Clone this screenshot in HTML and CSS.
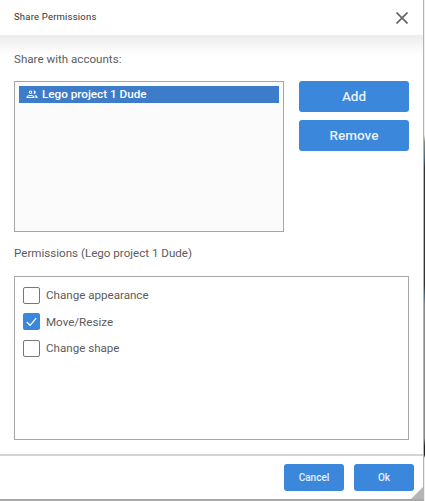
FILE: index.html
```html
<!DOCTYPE html>
<html lang="en">
<head>
    <meta charset="UTF-8">
    <meta name="viewport" content="width=device-width, initial-scale=1.0">
    <title>Share Permissions</title>
    <link rel="stylesheet" href="styles.css">
</head>
<body>
    <div class="dialog">
        <div class="dialog-header">
            <span class="dialog-title">Share Permissions</span>
            <svg class="close-icon" width="12" height="12" viewBox="0 0 12 12">
                <path d="M0.500 0.500L11.500 11.500M11.500 0.500L0.500 11.500" stroke="#666" stroke-width="1.700" fill="none"/>
            </svg>
        </div>

        <div class="dialog-body">
            <div class="section-label">Share with accounts:</div>
            <div class="accounts-row">
                <div class="account-list">
                    <div class="account-item">
                        <svg class="group-icon" width="12" height="12" viewBox="0 0 24 24">
                            <path d="M9 12a3.500 3.500 0 1 0 0-7 3.500 3.500 0 0 0 0 7zm0-2a1.500 1.500 0 1 1 0-3 1.500 1.500 0 0 1 0 3zm0 4c-2.700 0-8 1.300-8 4v2h16v-2c0-2.700-5.300-4-8-4zm-6 4c.3-.8 3.400-2 6-2s5.700 1.200 6 2H3zM16 12a3.500 3.500 0 0 0 0-7c-.4 0-.8.100-1.100.2a6 6 0 0 1 0 6.600c.3.100.7.200 1.100.2zm1 2.100c1.200.9 2 2.100 2 3.900v2h4v-2c0-2.300-3.500-3.600-6-3.900z" fill="#fff"/>
                        </svg>
                        <span>Lego project 1 Dude</span>
                    </div>
                </div>
                <div class="account-actions">
                    <button class="btn btn-large">Add</button>
                    <button class="btn btn-large">Remove</button>
                </div>
            </div>

            <div class="section-label permissions-label">Permissions (Lego project 1 Dude)</div>
            <div class="permission-list">
                <div class="permission-row">
                    <span class="checkbox"></span>
                    <span>Change appearance</span>
                </div>
                <div class="permission-row">
                    <span class="checkbox checked">
                        <svg width="17" height="17" viewBox="0 0 18 18">
                            <path d="M4 9.500L7.500 13L14 5.500" stroke="#fff" stroke-width="1.300" fill="none"/>
                        </svg>
                    </span>
                    <span>Move/Resize</span>
                </div>
                <div class="permission-row">
                    <span class="checkbox"></span>
                    <span>Change shape</span>
                </div>
            </div>
        </div>

        <div class="dialog-footer">
            <button class="btn btn-small">Cancel</button>
            <button class="btn btn-small">Ok</button>
        </div>
        <div class="resize-grip"></div>
    </div>
</body>
</html>
```

FILE: styles.css
```css
* {
    box-sizing: border-box;
}

body {
    margin: 0;
    width: 425px;
    height: 501px;
    overflow: hidden;
    background: linear-gradient(#f0f0f0 0, #f0f0f0 135px, #7f8f78 142px, #3f6f8a 158px, #333 168px, #333 285px, #3f6f8a 295px, #8a8a8a 305px, #8a8a8a 438px, #222 446px, #222 455px, #eee 458px);
    font-family: Roboto, "Liberation Sans", sans-serif;
    color: #555;
}

.dialog {
    position: relative;
    width: 424px;
    height: 501px;
    background: #fff;
    border-right: 1px solid #b4b4b4;
    border-bottom: 2px solid #a8a8a8;
    display: flex;
    flex-direction: column;
}

.dialog-header {
    height: 35px;
    flex-shrink: 0;
    display: flex;
    align-items: center;
    justify-content: space-between;
    padding: 0 15px 3px 14px;
}

.dialog-title {
    font-size: 9.500px;
    letter-spacing: 0.200px;
    color: #333;
}

.close-icon {
    display: block;
    margin-top: 3px;
}

.dialog-body {
    flex: 1;
    padding: 16px 14px 0 14px;
    background: linear-gradient(#ececec 0, #fff 20px);
}

.section-label {
    font-size: 11.600px;
    line-height: 16px;
    color: #5c5c5c;
}

.accounts-row {
    display: flex;
    justify-content: space-between;
    margin-top: 14px;
}

.account-list {
    width: 270px;
    height: 151px;
    border: 1px solid #a6a6a6;
    background: #fbfbfb;
    padding: 4px;
}

.account-item {
    height: 17px;
    background: #3d7cc9;
    color: #fff;
    font-size: 11.700px;
    font-weight: 500;
    display: flex;
    align-items: center;
    gap: 4px;
    padding: 0 0 1px 7px;
}

.group-icon {
    display: block;
}

.account-actions {
    width: 110px;
    display: flex;
    flex-direction: column;
    gap: 8px;
}

.btn {
    border: none;
    border-radius: 3px;
    background: #3a87dc;
    color: #e8f1fb;
    font-family: Roboto, "Liberation Sans", sans-serif;
    font-weight: 500;
    padding: 0;
}

.btn-large {
    height: 31px;
    font-size: 13.500px;
    padding-bottom: 2px;
}

.permissions-label {
    margin-top: 13px;
}

.permission-list {
    margin-top: 15px;
    height: 164px;
    border: 1px solid #a6a6a6;
    padding: 5px 8px;
}

.permission-row {
    height: 26.500px;
    display: flex;
    align-items: center;
    gap: 6px;
    font-size: 11.600px;
    color: #5c5c5c;
}

.checkbox {
    width: 17px;
    height: 17px;
    border: 1px solid #777;
    border-radius: 2px;
    background: #fff;
    display: block;
}

.checkbox.checked {
    border: none;
    background: #3a87dc;
}

.checkbox svg {
    display: block;
}

.dialog-footer {
    height: 45px;
    flex-shrink: 0;
    border-top: 2px solid #d4d4d4;
    display: flex;
    justify-content: flex-end;
    align-items: flex-start;
    gap: 10px;
    padding: 8px 9px 0 0;
}

.btn-small {
    width: 60px;
    height: 27px;
    font-size: 10px;
}

/* grip in the bottom corner */
.resize-grip {
    position: absolute;
    right: 0;
    bottom: 0;
    width: 0;
    height: 0;
    border-left: 12px solid transparent;
    border-bottom: 12px solid #b5b5b5;
}
```
